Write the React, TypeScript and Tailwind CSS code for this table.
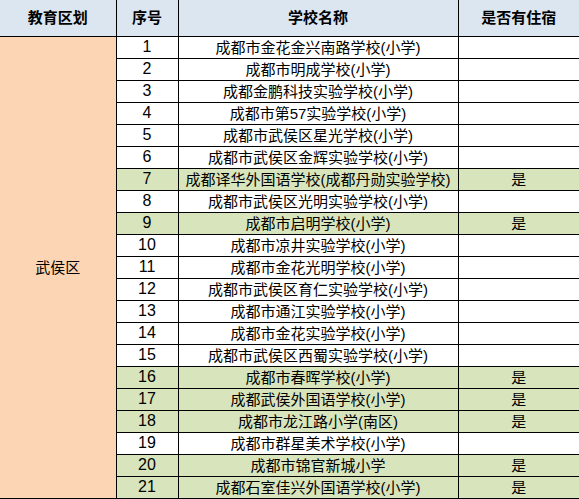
import React from 'react';

interface School {
  no: number;
  name: string;
  boarding: boolean;
}

const schools: School[] = [
  { no: 1, name: '成都市金花金兴南路学校(小学)', boarding: false },
  { no: 2, name: '成都市明成学校(小学)', boarding: false },
  { no: 3, name: '成都金鹏科技实验学校(小学)', boarding: false },
  { no: 4, name: '成都市第57实验学校(小学)', boarding: false },
  { no: 5, name: '成都市武侯区星光学校(小学)', boarding: false },
  { no: 6, name: '成都市武侯区金辉实验学校(小学)', boarding: false },
  { no: 7, name: '成都译华外国语学校(成都丹勋实验学校)', boarding: true },
  { no: 8, name: '成都市武侯区光明实验学校(小学)', boarding: false },
  { no: 9, name: '成都市启明学校(小学)', boarding: true },
  { no: 10, name: '成都市凉井实验学校(小学)', boarding: false },
  { no: 11, name: '成都市金花光明学校(小学)', boarding: false },
  { no: 12, name: '成都市武侯区育仁实验学校(小学)', boarding: false },
  { no: 13, name: '成都市通江实验学校(小学)', boarding: false },
  { no: 14, name: '成都市金花实验学校(小学)', boarding: false },
  { no: 15, name: '成都市武侯区西蜀实验学校(小学)', boarding: false },
  { no: 16, name: '成都市春晖学校(小学)', boarding: true },
  { no: 17, name: '成都武侯外国语学校(小学)', boarding: true },
  { no: 18, name: '成都市龙江路小学(南区)', boarding: true },
  { no: 19, name: '成都市群星美术学校(小学)', boarding: false },
  { no: 20, name: '成都市锦官新城小学', boarding: true },
  { no: 21, name: '成都石室佳兴外国语学校(小学)', boarding: true },
];

export default function App() {
  return (
    <div className="w-[579px] h-[499px] overflow-hidden bg-white text-black font-['Liberation_Sans','Noto_Sans_CJK_SC',sans-serif]">
      <table className="w-[579px] table-fixed border-collapse text-[15px] leading-none">
        <colgroup>
          <col className="w-[116px]" />
          <col className="w-[62px]" />
          <col className="w-[280px]" />
          <col className="w-[121px]" />
        </colgroup>
        <thead>
          <tr className="h-[36px] bg-[#dce6f1] font-bold">
            <th className="border-r border-b border-black p-0 text-center font-bold">教育区划</th>
            <th className="border-r border-b border-black p-0 text-center font-bold">序号</th>
            <th className="border-r border-b border-black p-0 text-center font-bold">学校名称</th>
            <th className="border-b border-black p-0 text-center font-bold">是否有住宿</th>
          </tr>
        </thead>
        <tbody>
          {schools.map((s, i) => (
            <tr key={s.no} className={s.boarding ? 'h-[22px] bg-[#d8e4bc]' : 'h-[22px] bg-white'}>
              {i === 0 && (
                <td
                  rowSpan={schools.length}
                  className="border-r border-b border-black bg-[#fcd5b4] p-0 text-center align-middle"
                >
                  武侯区
                </td>
              )}
              <td className="border-r border-b border-black p-0 text-center text-[16px]">{s.no}</td>
              <td className="border-r border-b border-black p-0 text-center whitespace-nowrap">{s.name}</td>
              <td className="border-b border-black p-0 text-center">{s.boarding ? '是' : ''}</td>
            </tr>
          ))}
        </tbody>
      </table>
    </div>
  );
}
